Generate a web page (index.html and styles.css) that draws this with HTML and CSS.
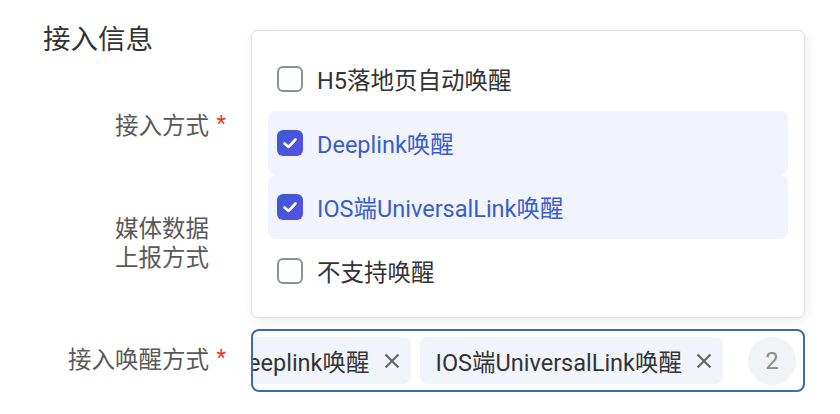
FILE: index.html
```html
<!DOCTYPE html>
<html lang="zh-CN">
<head>
    <meta charset="UTF-8">
    <meta name="viewport" content="width=device-width, initial-scale=1.0">
    <title>接入信息</title>
    <link rel="stylesheet" href="styles.css">
</head>
<body>
    <div class="section">
        <h2 class="section-title">接入信息</h2>

        <div class="form-item">
            <div class="label"><span class="label-text">接入方式</span><span class="star">*</span></div>
            <div class="control"></div>
        </div>

        <div class="form-item">
            <div class="label"><span class="label-text">媒体数据<br>上报方式</span><span class="star"></span></div>
            <div class="control"></div>
        </div>

        <div class="form-item">
            <div class="label"><span class="label-text">接入唤醒方式</span><span class="star">*</span></div>
            <div class="control">
                <div class="select">
                    <div class="tags">
                        <span class="tag">Deeplink唤醒
                            <svg class="tag-close" viewBox="0 0 16 16"><path d="M1.5 1.5L14.5 14.5M14.5 1.5L1.5 14.5"/></svg>
                        </span>
                        <span class="tag">IOS端UniversalLink唤醒
                            <svg class="tag-close" viewBox="0 0 16 16"><path d="M1.5 1.5L14.5 14.5M14.5 1.5L1.5 14.5"/></svg>
                        </span>
                    </div>
                    <span class="count">2</span>
                </div>

                <div class="dropdown">
                    <div class="option">
                        <span class="checkbox"></span>
                        <span>H5落地页自动唤醒</span>
                    </div>
                    <div class="option checked">
                        <span class="checkbox"><svg viewBox="0 0 26 26"><path d="M7.5 13.5L11.5 17L18.5 9.5"/></svg></span>
                        <span>Deeplink唤醒</span>
                    </div>
                    <div class="option checked">
                        <span class="checkbox"><svg viewBox="0 0 26 26"><path d="M7.5 13.5L11.5 17L18.5 9.5"/></svg></span>
                        <span>IOS端UniversalLink唤醒</span>
                    </div>
                    <div class="option">
                        <span class="checkbox"></span>
                        <span>不支持唤醒</span>
                    </div>
                </div>
            </div>
        </div>
    </div>
</body>
</html>
```

FILE: styles.css
```css
body {
    margin: 0;
    background: #fff;
    font-family: Roboto, "Noto Sans CJK SC", sans-serif;
    color: #333;
}

.section { padding: 20px 0 0; }

.section-title {
    margin: 0 0 35px 43px;
    font-size: 27.5px;
    font-weight: normal;
    line-height: 40px;
    color: #333;
}

.form-item {
    display: flex;
    align-items: center;
    height: 63px;
    margin-bottom: 54px;
}
.form-item:last-child { margin-bottom: 0; }

.label {
    width: 226px;
    flex-shrink: 0;
    display: flex;
    justify-content: flex-end;
    align-items: center;
    font-size: 23.5px;
    line-height: 29px;
    color: #595959;
    text-align: right;
}
.star {
    min-width: 12px;
    margin-left: 5px;
    color: #f2341c;
    font-size: 22px;
    line-height: 22px;
    margin-top: -6px;
}

.control {
    position: relative;
    width: 554px;
    margin-left: 25px;
    height: 63px;
}

.select {
    box-sizing: border-box;
    height: 63px;
    border: 2px solid #4265b5;
    border-radius: 8px;
    display: flex;
    align-items: center;
    padding: 0 7px 0 0;
    overflow: hidden;
}
.tags {
    flex: 1;
    display: flex;
    justify-content: flex-end;
    gap: 9px;
    overflow: hidden;
    min-width: 0;
}
.tag {
    flex-shrink: 0;
    display: flex;
    align-items: center;
    gap: 14px;
    height: 47px;
    padding: 0 11px 0 16px;
    border-radius: 8px;
    background: #f2f4fb;
    font-size: 23.5px;
    color: #333;
    white-space: nowrap;
}
.tag-close { width: 16px; height: 16px; }
.tag-close path { stroke: #666; stroke-width: 2.2; fill: none; }
.count {
    flex-shrink: 0;
    width: 48px;
    height: 48px;
    margin-left: 25px;
    border-radius: 50%;
    background: #f2f3f7;
    color: #8c8c8c;
    font-size: 24px;
    display: flex;
    align-items: center;
    justify-content: center;
}

.dropdown {
    position: absolute;
    left: 0;
    right: 0;
    bottom: calc(100% + 11px);
    box-sizing: border-box;
    padding: 16px 16px 14px;
    background: #fff;
    border: 1px solid #dedede;
    border-radius: 7px;
    box-shadow: 2px 3px 12px rgba(0, 0, 0, 0.07);
}
.option {
    display: flex;
    align-items: center;
    gap: 14px;
    height: 64px;
    padding-left: 9px;
    border-radius: 8px;
    font-size: 23.5px;
    color: #333;
}
.option.checked {
    background: #f1f4fd;
    color: #3a5ccc;
}
.checkbox {
    box-sizing: border-box;
    width: 26px;
    height: 26px;
    border: 2px solid #8c9099;
    border-radius: 6px;
    background: #fff;
}
.option.checked .checkbox {
    border: none;
    background: linear-gradient(135deg, #3a5bd6, #5a4fe2);
}
.checkbox svg { display: block; width: 26px; height: 26px; }
.checkbox path { stroke: #fff; stroke-width: 2.6; fill: none; stroke-linecap: round; stroke-linejoin: round; }
```
